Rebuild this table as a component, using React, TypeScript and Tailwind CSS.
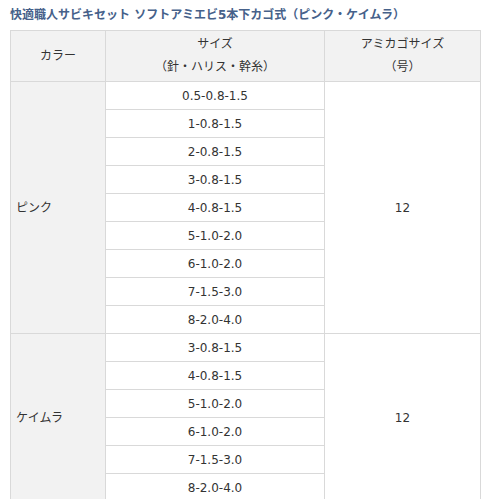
const sizes = {
  pink: ['0.5-0.8-1.5', '1-0.8-1.5', '2-0.8-1.5', '3-0.8-1.5', '4-0.8-1.5', '5-1.0-2.0', '6-1.0-2.0', '7-1.5-3.0', '8-2.0-4.0'],
  keimura: ['3-0.8-1.5', '4-0.8-1.5', '5-1.0-2.0', '6-1.0-2.0', '7-1.5-3.0', '8-2.0-4.0'],
}

const groups = [
  { color: 'ピンク', rows: sizes.pink, net: '12' },
  { color: 'ケイムラ', rows: sizes.keimura, net: '12' },
]

export default function App() {
  return (
    <div
      className="bg-white pl-[10px] pt-[7px] text-[12px] text-[#333]"
      style={{ fontFamily: '"DejaVu Sans", "Noto Sans CJK JP", sans-serif' }}
    >
      <h2 className="h-[23px] text-[12px] font-bold leading-[16px] text-[#46618a]">
        快適職人サビキセット ソフトアミエビ5本下カゴ式（ピンク・ケイムラ）
      </h2>
      <table className="w-[471px] table-fixed border-collapse">
        <colgroup>
          <col className="w-[95px]" />
          <col className="w-[219px]" />
          <col />
        </colgroup>
        <thead>
          <tr className="h-[51px] bg-[#f2f2f2]">
            <th className="border border-[#d9d9d9] font-normal leading-[23px]">カラー</th>
            <th className="border border-[#d9d9d9] font-normal leading-[23px]">
              サイズ
              <br />
              （針・ハリス・幹糸）
            </th>
            <th className="border border-[#d9d9d9] font-normal leading-[23px]">
              アミカゴサイズ
              <br />
              （号）
            </th>
          </tr>
        </thead>
        <tbody>
          {groups.map((g) =>
            g.rows.map((size, i) => (
              <tr key={g.color + size} className="h-[28px]">
                {i === 0 && (
                  <td rowSpan={g.rows.length} className="border border-[#d9d9d9] bg-[#f2f2f2] pl-[5px]">
                    {g.color}
                  </td>
                )}
                <td className="border border-[#d9d9d9] text-center">{size}</td>
                {i === 0 && (
                  <td rowSpan={g.rows.length} className="border border-[#d9d9d9] text-center">
                    {g.net}
                  </td>
                )}
              </tr>
            ))
          )}
        </tbody>
      </table>
    </div>
  )
}
